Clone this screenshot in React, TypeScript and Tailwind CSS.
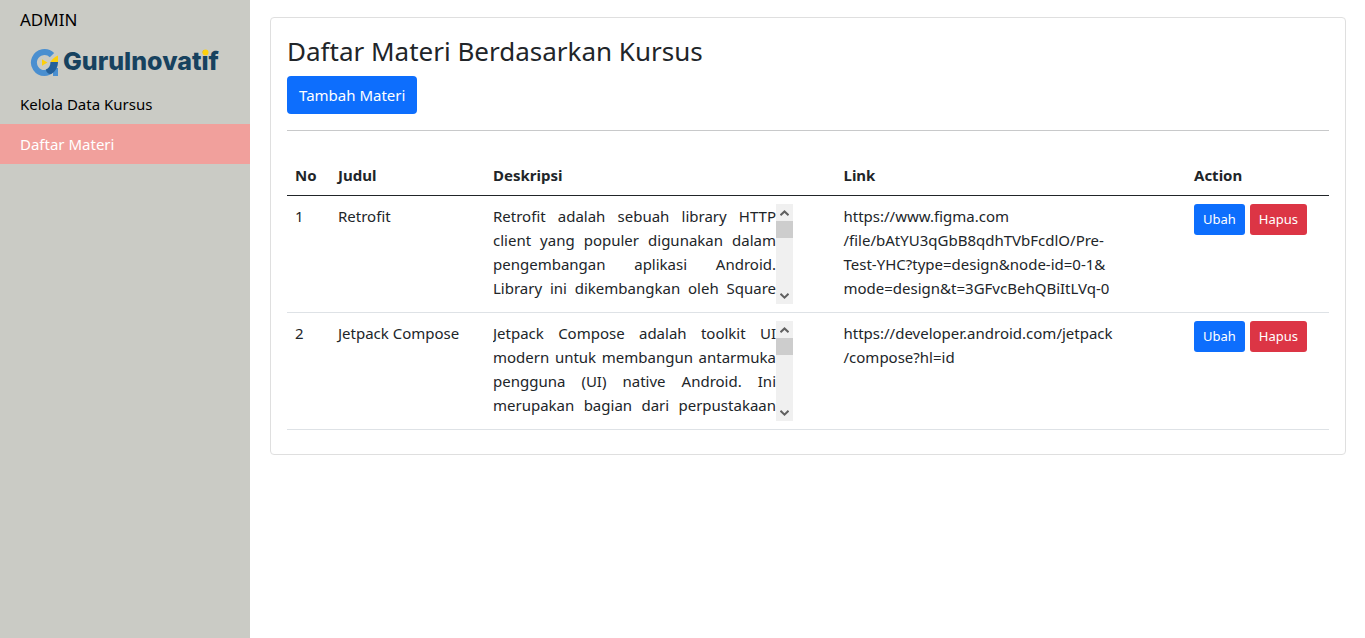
import { useRef } from "react";

type Materi = {
  no: number;
  judul: string;
  deskripsi: string;
  link: string[];
};

const daftarMateri: Materi[] = [
  {
    no: 1,
    judul: "Retrofit",
    deskripsi:
      "Retrofit adalah sebuah library HTTP client yang populer digunakan dalam pengembangan aplikasi Android. Library ini dikembangkan oleh Square",
    link: [
      "https://www.figma.com",
      "/file/bAtYU3qGbB8qdhTVbFcdlO/Pre-",
      "Test-YHC?type=design&node-id=0-1&",
      "mode=design&t=3GFvcBehQBiItLVq-0",
    ],
  },
  {
    no: 2,
    judul: "Jetpack Compose",
    deskripsi:
      "Jetpack Compose adalah toolkit UI modern untuk membangun antarmuka pengguna (UI) native Android. Ini merupakan bagian dari perpustakaan",
    link: ["https://developer.android.com/jetpack", "/compose?hl=id"],
  },
];

function Logo() {
  return (
    <svg
      role="img"
      aria-label="GuruInovatif"
      className="block h-11 w-[200px]"
      viewBox="0 0 200 44"
    >
      <path
        d="M22 15.200 A10.500 10.500 0 1 0 14.500 33 C17 33 19.500 32 21 30.500"
        fill="none"
        stroke="#4a8fd0"
        strokeWidth="6"
      />
      <path d="M23 28 H28 V36 H23Z" fill="#4a8fd0" />
      <path d="M20.500 22 H28 C28 27 25.500 31.500 21.500 33.800 C19 34.500 16.500 33 15.800 29.500 C18.500 28.500 20.500 26 20.500 22Z" fill="#24609a" />
      <path d="M20.500 22 C21.500 19.500 24.500 17 28 15.500 V22Z" fill="#fdd00c" />
      <path d="M12 19.200 L17.500 22.500 L12 25.800Z" fill="#fdd00c" />
      <text
        x="33"
        y="30"
        fill="#17425f"
        className="font-['Inter',sans-serif] text-[25px] font-extrabold"
      >
        GuruInovatif
      </text>
      <circle cx="175.500" cy="12.500" r="3" fill="#fdd00c" />
    </svg>
  );
}

function Deskripsi({ text }: { text: string }) {
  const box = useRef<HTMLDivElement>(null);
  const scroll = (top: number) => box.current?.scrollBy({ top });

  return (
    <div className="flex h-[100px] w-[300px]">
      <div
        ref={box}
        className="min-w-0 flex-1 overflow-y-auto text-justify [scrollbar-width:none] [text-align-last:justify]"
      >
        {text}
      </div>
      <div className="flex w-[17px] shrink-0 flex-col bg-[#f0f0f0]">
        <button
          type="button"
          aria-label="Gulir ke atas"
          onClick={() => scroll(-24)}
          className="flex h-[17px] items-center justify-center"
        >
          <svg width="9" height="6" viewBox="0 0 9 6" fill="none" stroke="#606060" strokeWidth="2">
            <path d="M0.500 5.200 L4.500 1.400 L8.500 5.200" />
          </svg>
        </button>
        <div className="h-[17px] bg-[#cdcdcd]" />
        <button
          type="button"
          aria-label="Gulir ke bawah"
          onClick={() => scroll(24)}
          className="mt-auto flex h-[17px] items-center justify-center"
        >
          <svg width="9" height="6" viewBox="0 0 9 6" fill="none" stroke="#606060" strokeWidth="2">
            <path d="M0.500 0.800 L4.500 4.600 L8.500 0.800" />
          </svg>
        </button>
      </div>
    </div>
  );
}

export default function App() {
  return (
    <div className="flex min-h-screen bg-white font-['Noto_Sans',sans-serif] text-[15px] leading-6 text-[#212529]">
      <aside className="w-[250px] shrink-0 bg-[#cacbc5] text-black">
        <div className="flex h-10 items-center px-5 text-[17px]">ADMIN</div>
        <div className="px-[30px]">
          <Logo />
        </div>
        <nav>
          <a href="#kursus" className="block px-5 py-2">
            Kelola Data Kursus
          </a>
          <a href="#materi" aria-current="page" className="block bg-[#f1a09c] px-5 py-2 text-white">
            Daftar Materi
          </a>
        </nav>
      </aside>

      <main className="min-w-0 flex-1 py-[17px] pr-[19px] pl-5">
        <section className="rounded border border-[#dfdfdf] p-4">
          <h1 className="mb-2 text-[26px] leading-[34px]">Daftar Materi Berdasarkan Kursus</h1>
          <button type="button" className="block rounded bg-[#0d6efd] px-3 py-[7px] text-white">
            Tambah Materi
          </button>
          <hr className="my-4 border-[#c8c9ca]" />
          <div className="py-2">
            <table className="w-full table-fixed border-collapse text-left align-top">
              <colgroup>
                <col className="w-[43px]" />
                <col className="w-[155px]" />
                <col />
                <col />
                <col className="w-[143px]" />
              </colgroup>
              <thead>
                <tr className="border-b border-[#212529]">
                  <th className="p-2 font-bold">No</th>
                  <th className="p-2 font-bold">Judul</th>
                  <th className="p-2 font-bold">Deskripsi</th>
                  <th className="p-2 font-bold">Link</th>
                  <th className="p-2 font-bold">Action</th>
                </tr>
              </thead>
              <tbody>
                {daftarMateri.map((m) => (
                  <tr key={m.no} className="border-b border-[#dee2e6] align-top">
                    <td className="p-2">{m.no}</td>
                    <td className="p-2">{m.judul}</td>
                    <td className="p-2">
                      <Deskripsi text={m.deskripsi} />
                    </td>
                    <td className="p-2">
                      {m.link.map((part) => (
                        <span key={part} className="block">
                          {part}
                        </span>
                      ))}
                    </td>
                    <td className="p-2">
                      <div className="flex gap-[5px] text-[13px] leading-[21px] text-white">
                        <button type="button" className="rounded-[3px] bg-[#0d6efd] px-[9px] py-[5px]">
                          Ubah
                        </button>
                        <button type="button" className="rounded-[3px] bg-[#dc3545] px-[9px] py-[5px]">
                          Hapus
                        </button>
                      </div>
                    </td>
                  </tr>
                ))}
              </tbody>
            </table>
          </div>
        </section>
      </main>
    </div>
  );
}
